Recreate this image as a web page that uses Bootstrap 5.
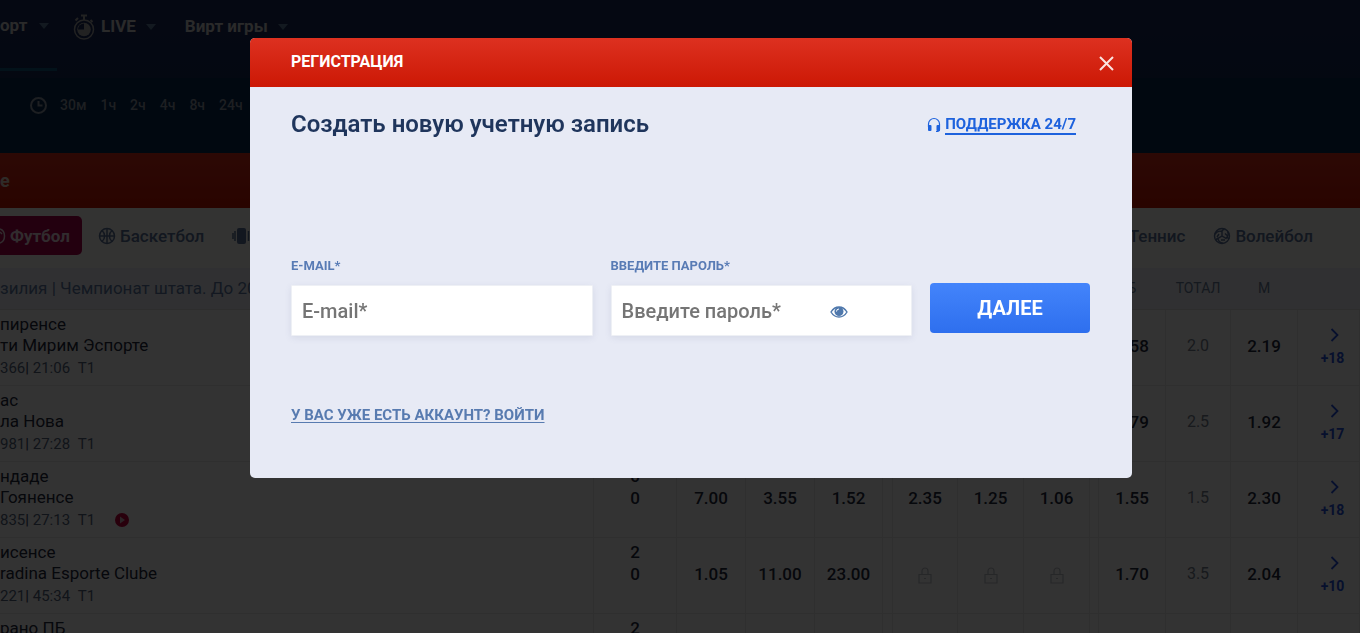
<!DOCTYPE html>
<html lang="ru">
<head>
<meta charset="utf-8">
<meta name="viewport" content="width=device-width, initial-scale=1">
<title>Регистрация</title>
<link href="https://cdn.jsdelivr.net/npm/bootstrap@5.3.0/dist/css/bootstrap.min.css" rel="stylesheet">
<style>
body { font-family: Roboto, "Liberation Sans", sans-serif; color: #1f2a3d; background: #fff; }

/* Page header */
.topnav { height: 78px; background: linear-gradient(#1c2a5c, #152858); }
.topnav a { height: 54px; color: #cfcfcf; font-size: 17px; font-weight: 700; text-decoration: none; }
.topnav a.current { width: 57px; height: 71px; padding-bottom: 17px; border-bottom: 3px solid #0f5a80; }
.topnav .caret { color: #5f7f9f; }
.topnav .label-live { margin-left: 6px; }
.topnav .virtual { margin-left: 27px; }
.times { height: 75px; padding: 17px 0 0 29px; background: #08284f; }
.times a { color: #8f9aa8; font-size: 14px; font-weight: 500; line-height: 20px; text-decoration: none; }
.times svg { color: #8f9aa8; }
.times .hours { gap: 14px; }
.livebar { height: 55px; background: linear-gradient(#dd2d1c, #cc1400); color: #e8d8c8; font-size: 18px; font-weight: 700; }

/* Sport tabs */
.sports { height: 60px; padding: 8px 47px 13px 0; background: #fdfdfa; }
.sports a { color: #5a7299; font-size: 17px; font-weight: 500; line-height: 22px; text-decoration: none; }
.sports a.active { width: 82px; height: 39px; background: #b0004e; color: #f2dbe4; border-radius: 0 5px 5px 0; font-weight: 700; }

/* Odds table */
.odds { table-layout: fixed; width: 100%; border-collapse: collapse; }
.odds th { height: 41px; padding: 0; background: #eef1f8; color: #6a7d9c; font-size: 14px; font-weight: 400; text-align: center; border-bottom: 1px solid #e2e2e2; }
.odds th.league { font-size: 17px; text-align: left; color: #5f7aa6; }
.odds td { height: 76px; padding: 0 0 2px; font-size: 17px; font-weight: 500; line-height: 22px; text-align: center; border: solid #ececec; border-width: 0 1px 1px 0; white-space: nowrap; }
.odds td.teams { font-weight: 400; line-height: 21px; text-align: left; vertical-align: top; padding-top: 4px; }
.odds td.sc { vertical-align: top; padding-top: 3px; }
.odds .meta { font-size: 15px; line-height: 24px; color: #55667f; }
.odds .meta b { font-weight: 500; color: #3c4c66; }
.odds .meta svg { margin: -2px 0 0 20px; }
.odds td.total { font-size: 16px; font-weight: 400; color: #77818f; }
.odds td.more { padding-left: 8px; }
.odds td.more a { color: #2450e0; font-size: 14px; line-height: 18px; font-weight: 700; text-decoration: none; }
.odds td.more svg { margin: 0 0 4px 4px; }
.odds svg.lock { color: #bfc1c8; }

/* Registration dialog */
.modal-backdrop.show { opacity: .8; }
.reg { padding-left: 22px; }
.reg .modal-dialog { max-width: 882px; margin: 38px auto 0; }
.reg .modal-content { border: 0; border-radius: 5px; background: #e7eaf5; overflow: hidden; }
.reg .modal-header { height: 49px; padding: 0 18px 2px 41px; border: 0; border-radius: 0; background: linear-gradient(#dd3120, #cc1805); color: #fff; }
.reg .modal-title { font-size: 16px; font-weight: 700; line-height: 20px; }
.reg .shut { padding: 2px 0 0; border: 0; background: none; color: #fbe4e0; line-height: 1; }
.reg .modal-body { padding: 19px 42px 51px 41px; }
.reg h2 { font-size: 24px; font-weight: 600; line-height: 36px; color: #1f355c; }
.support { margin: 2px 14px 0 0; color: #1e62dd; font-size: 15px; font-weight: 700; line-height: 18px; }
.support span { border-bottom: 2px solid; }
.fields { gap: 18px; margin-top: 115px; }
.field { flex: 1 1 0; }
.field label { font-size: 13px; font-weight: 700; line-height: 18px; color: #587bb5; margin-bottom: 10px; }
.field .form-control { height: 51px; padding: 0 10px; border: 1px solid #eef0f5; border-radius: 1px; background: #fff; font-size: 20px; font-weight: 500; box-shadow: 0 2px 6px rgba(90, 100, 140, .12); }
.field .form-control::placeholder { color: #757575; opacity: 1; }
.peek { right: 64px; bottom: 17px; padding: 0; border: 0; background: none; color: #4f78ac; line-height: 1; }
.next { width: 160px; height: 50px; margin-bottom: 3px; border: 0; border-radius: 4px; background: linear-gradient(#4384fb, #2e6fee); color: #fff; font-size: 20px; font-weight: 700; }
.login { margin-top: 69px; color: #587bb0; font-size: 15px; font-weight: 700; line-height: 20px; text-underline-offset: 2px; }
</style>
</head>
<body class="vh-100 overflow-hidden">

<svg class="d-none" aria-hidden="true">
  <symbol id="i-caret" viewBox="0 0 10 6"><path d="M0 0h10L5 6z" fill="currentColor"/></symbol>
  <symbol id="i-next" viewBox="0 0 9 14"><path d="M1.500 1l6 6-6 6" fill="none" stroke="currentColor" stroke-width="1.800"/></symbol>
  <symbol id="i-lock" viewBox="0 0 14 17"><path d="M1 7.500h12v8.500H1zM4 7.500V4a3 3 0 0 1 6 0v3.500M6 11.500h2" fill="none" stroke="currentColor" stroke-width="1.200"/></symbol>
</svg>

<header>
  <nav class="topnav d-flex align-items-start" aria-label="Разделы">
    <a href="#" class="current d-flex align-items-center">орт<svg class="caret ms-auto me-2" width="10" height="6"><use href="#i-caret"/></svg></a>
    <a href="#" class="d-flex align-items-center ms-3">
      <svg width="22" height="27" viewBox="0 0 22 27" fill="none" stroke="#a9a9a9"><circle cx="11" cy="15.500" r="9.500" stroke-width="1.500"/><circle cx="11" cy="15.500" r="6.800" fill="#a9a9a9" stroke="none"/><path d="M11 15.500V9.500A6 6 0 0 0 5 15.500z" fill="#1c2a5c" stroke="none"/><path d="M8 1.500h6M11 2v4M2.500 6.500L5 4M17.500 6l2 2" stroke-width="2"/></svg>
      <span class="label-live">LIVE</span><svg class="caret ms-2" width="14" height="6"><use href="#i-caret"/></svg>
    </a>
    <a href="#" class="virtual d-flex align-items-center">Вирт игры<svg class="caret ms-2" width="14" height="6"><use href="#i-caret"/></svg></a>
  </nav>
  <nav class="times d-flex align-items-start" aria-label="Время до начала">
    <svg class="me-2" width="19" height="20" viewBox="0 0 19 20" fill="none" stroke="currentColor" stroke-width="2"><circle cx="9.500" cy="10.500" r="7.500"/><path d="M9.500 6v4.500h4"/></svg>
    <div class="hours d-flex"><a href="#" class="ms-1">30м</a><a href="#">1ч</a><a href="#">2ч</a><a href="#">4ч</a><a href="#">8ч</a><a href="#">24ч</a></div>
  </nav>
  <div class="livebar d-flex align-items-center">е</div>
</header>

<nav class="sports d-flex align-items-center" aria-label="Виды спорта">
  <a href="#" class="active d-flex align-items-center"><svg class="me-1" width="6" height="18" viewBox="0 0 6 18" fill="none" stroke="currentColor" stroke-width="1.500"><path d="M0 2c6 2 6 12 0 14M0 5l2 2"/></svg>Футбол</a>
  <a href="#" class="d-flex align-items-center ms-3"><svg class="me-1" width="18" height="18" viewBox="0 0 18 18" fill="none" stroke="currentColor" stroke-width="1.500"><circle cx="9" cy="9" r="7.500"/><path d="M9 1.500v15M1.500 9h15M4 3.500c3.500 3 3.500 8 0 11M14 3.500c-3.500 3-3.500 8 0 11"/></svg>Баскетбол</a>
  <a href="#" class="d-flex align-items-center ms-4" aria-label="Киберспорт"><svg class="ms-1" width="20" height="18" viewBox="0 0 20 18" fill="currentColor"><rect x="5" y="1" width="9" height="16" rx="2"/><path d="M3 4v10M1 6v6M16.500 4v10" stroke="currentColor" stroke-width="1.500"/></svg></a>
  <a href="#" class="ms-auto">Теннис</a>
  <a href="#" class="d-flex align-items-center ps-4 ms-1"><svg class="me-1" width="18" height="18" viewBox="0 0 18 18" fill="none" stroke="currentColor" stroke-width="1.400"><circle cx="9" cy="9" r="7.500"/><path d="M9 9V4.500C6 3.500 3.500 5 2 7M9 9l4 2.300c2.300-2 2.500-5 1.500-7M9 9l-4 2.300c0 3 2 4.500 5 5M11.500 2.500c-2 0-2.500 1-2.500 2M16 12c-1-1.500-2-1.500-3-.7M3 13.500c.5-1.500 1-2 2-2.200M6 7l-2 3M12 6.500l2 2M8 13h4"/></svg>Волейбол</a>
</nav>

<table class="odds">
  <colgroup>
    <col><col style="width:83px"><col style="width:69px"><col style="width:69px"><col style="width:68px"><col style="width:10px"><col style="width:65px"><col style="width:66px"><col style="width:66px"><col style="width:9px"><col style="width:67px"><col style="width:65px"><col style="width:67px"><col style="width:62px">
  </colgroup>
  <thead>
    <tr><th class="league">зилия | Чемпионат штата. До 20</th><th></th><th></th><th></th><th></th><th></th><th></th><th></th><th></th><th></th><th>Б</th><th>ТОТАЛ</th><th>М</th><th></th></tr>
  </thead>
  <tbody>
    <tr><td class="teams">пиренсе<br>ти Мирим Эспорте<div class="meta">366<b>|</b> 21:06&ensp;T1</div></td><td class="sc"></td><td></td><td></td><td></td><td></td><td></td><td></td><td></td><td></td><td>1.58</td><td class="total">2.0</td><td>2.19</td><td class="more"><a href="#"><svg width="9" height="14"><use href="#i-next"/></svg><br>+18</a></td></tr>
    <tr><td class="teams">ас<br>ла Нова<div class="meta">981<b>|</b> 27:28&ensp;T1</div></td><td class="sc"></td><td></td><td></td><td></td><td></td><td></td><td></td><td></td><td></td><td>1.79</td><td class="total">2.5</td><td>1.92</td><td class="more"><a href="#"><svg width="9" height="14"><use href="#i-next"/></svg><br>+17</a></td></tr>
    <tr><td class="teams">ндаде<br>Гояненсе<div class="meta">835<b>|</b> 27:13&ensp;T1<svg width="14" height="14" viewBox="0 0 14 14"><circle cx="7" cy="7" r="7" fill="#c8003c"/><path d="M5 3.500v7l5-3.500z" fill="#d8b8c0"/></svg></div></td><td class="sc">0<br>0</td><td>7.00</td><td>3.55</td><td>1.52</td><td></td><td>2.35</td><td>1.25</td><td>1.06</td><td></td><td>1.55</td><td class="total">1.5</td><td>2.30</td><td class="more"><a href="#"><svg width="9" height="14"><use href="#i-next"/></svg><br>+18</a></td></tr>
    <tr><td class="teams">исенсе<br>radina Esporte Clube<div class="meta">221<b>|</b> 45:34&ensp;T1</div></td><td class="sc">2<br>0</td><td>1.05</td><td>11.00</td><td>23.00</td><td></td><td><svg class="lock" width="14" height="17"><use href="#i-lock"/></svg></td><td><svg class="lock" width="14" height="17"><use href="#i-lock"/></svg></td><td><svg class="lock" width="14" height="17"><use href="#i-lock"/></svg></td><td></td><td>1.70</td><td class="total">3.5</td><td>2.04</td><td class="more"><a href="#"><svg width="9" height="14"><use href="#i-next"/></svg><br>+10</a></td></tr>
    <tr><td class="teams">рано ПБ</td><td class="sc">2</td><td></td><td></td><td></td><td></td><td></td><td></td><td></td><td></td><td></td><td></td><td></td><td></td></tr>
  </tbody>
</table>

<div class="modal-backdrop show"></div>
<div class="modal reg d-block" role="dialog" aria-modal="true" aria-labelledby="regTitle">
  <div class="modal-dialog">
    <div class="modal-content">
      <div class="modal-header">
        <h1 class="modal-title" id="regTitle">РЕГИСТРАЦИЯ</h1>
        <button type="button" class="shut" aria-label="Закрыть"><svg width="15" height="15" viewBox="0 0 15 15"><path d="M1 1l13 13M14 1L1 14" stroke="currentColor" stroke-width="2"/></svg></button>
      </div>
      <div class="modal-body">
        <div class="d-flex justify-content-between align-items-center">
          <h2 class="m-0">Создать новую учетную запись</h2>
          <a href="#" class="support d-flex align-items-center text-decoration-none"><svg class="me-1" width="14" height="16" viewBox="0 0 14 16"><path d="M1.500 10V7a5.500 5.500 0 0 1 11 0v5.500c0 1.500-1 2-3.500 2" fill="none" stroke="currentColor" stroke-width="1.200"/><rect x="1" y="8" width="3.500" height="6" rx="1" fill="currentColor"/><rect x="9.500" y="8" width="3.500" height="6" rx="1" fill="currentColor"/></svg><span>ПОДДЕРЖКА 24/7</span></a>
        </div>
        <form class="fields d-flex align-items-end">
          <div class="field">
            <label class="d-block" for="email">E-MAIL*</label>
            <input type="email" class="form-control" id="email" placeholder="E-mail*">
          </div>
          <div class="field position-relative">
            <label class="d-block" for="pass">ВВЕДИТЕ ПАРОЛЬ*</label>
            <input type="password" class="form-control" id="pass" placeholder="Введите пароль*">
            <button type="button" class="peek position-absolute" aria-label="Показать пароль"><svg width="18" height="14" viewBox="0 0 18 14"><path d="M1 7c4-6.700 12-6.700 16 0-4 6.700-12 6.700-16 0z" fill="none" stroke="currentColor" stroke-width="1.400"/><circle cx="9" cy="6.500" r="4.500" fill="currentColor"/><path d="M6.500 6.500a2.500 2.500 0 0 1 2.500-2.500" fill="none" stroke="#fff"/></svg></button>
          </div>
          <button type="submit" class="next">ДАЛЕЕ</button>
        </form>
        <a href="#" class="login d-inline-block">У ВАС УЖЕ ЕСТЬ АККАУНТ? ВОЙТИ</a>
      </div>
    </div>
  </div>
</div>

<script src="https://cdn.jsdelivr.net/npm/bootstrap@5.3.0/dist/js/bootstrap.bundle.min.js"></script>
</body>
</html>
